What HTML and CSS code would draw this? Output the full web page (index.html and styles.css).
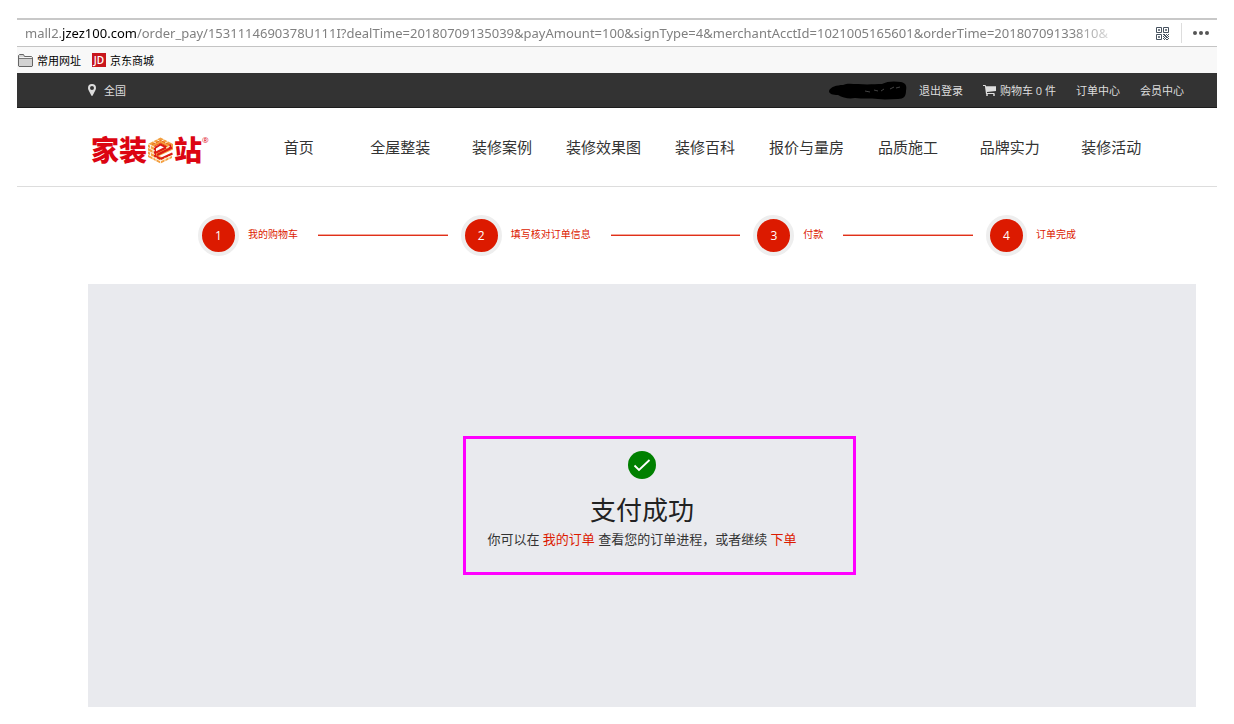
FILE: index.html
```html
<!DOCTYPE html>
<html lang="zh-CN">
<head>
  <meta charset="UTF-8">
  <meta name="viewport" content="width=device-width, initial-scale=1.0">
  <title>支付成功</title>
  <link rel="stylesheet" href="styles.css">
</head>
<body>
  <div class="window">
    <div class="address-bar">
      <div class="url" role="textbox" contenteditable="true" spellcheck="false">mall2.<span class="domain">jzez100.com</span>/order_pay/1531114690378U111I?dealTime=20180709135039&amp;payAmount=100&amp;signType=4&amp;merchantAcctId=1021005165601&amp;orderTime=20180709133810&amp;</div>
      <button class="qr-btn" aria-label="QR">
        <svg width="13" height="13" viewBox="0 0 13 13" fill="none" stroke="#46525f">
          <path d="M.5.5h5v5h-5zM7.5.5h5v5h-5zM.5 7.5h5v5h-5z"/>
          <path d="M2 3h2M9 3h2M2 10h2M3 2v2M10 2v2M3 9v2" />
          <path d="M7 7.5h2M10 7.5h1M12 7.5h1M8 8.5h2M11 8.5h1M7 9.5h1M9 9.5h2M12 9.5h1M8 10.5h1M10 10.5h2M7 11.5h1M9 11.5h1M12 11.5h1M8 12.5h1M10 12.5h2"/>
        </svg>
      </button>
      <button class="more-btn" aria-label="更多">
        <svg width="16" height="4" viewBox="0 0 16 4" fill="#555"><circle cx="2" cy="2" r="2"/><circle cx="8" cy="2" r="2"/><circle cx="14" cy="2" r="2"/></svg>
      </button>
    </div>

    <div class="bookmarks">
      <a href="#">
        <svg width="15" height="13" viewBox="0 0 15 13"><path d="M.5 12V1.5l1-1h4l1 2h7l1 1V12l-.5.5h-13z" fill="#d2d2d2" stroke="#666"/><path d="M1 4.5h13" stroke="#777"/><path d="M1.5 3.5h12" stroke="#f4f4f4"/></svg>
        常用网址
      </a>
      <a href="#"><span class="jd">JD</span>京东商城</a>
    </div>

    <div class="topbar">
      <a href="#" class="city">
        <svg width="8" height="12" viewBox="0 0 8 12"><path fill="#ddd" fill-rule="evenodd" d="M4 0a4 4 0 0 1 4 4c0 1-.3 1.600-.6 2.300L4.700 11.500a.8.8 0 0 1-1.400 0L.6 6.300C.3 5.600 0 5 0 4a4 4 0 0 1 4-4zm0 2a2 2 0 1 0 0 4 2 2 0 0 0 0-4z"/></svg>
        全国
      </a>
      <div class="user-links">
        <svg class="scribble" width="78" height="19" viewBox="0 0 78 19">
          <path d="M0 10C1 6 8 4 14 4c4-2 9-1 15-1 10 1 17 0 24 0 5-3 13-3 19-2 5 1 6 4 5 9 0 5-2 8-8 8-7 0-13 1-20 0-8-1-15 0-23-1-6 1-12 0-17-3-5 0-9-1-9-4z"/>
          <path d="M36 10l5 1M45 9l4 1M52 10l3-2M61 8l4-2M67 7l4-1" stroke="#444" fill="none"/>
        </svg>
        <a href="#">退出登录</a>
        <a href="#" class="cart">
          <svg width="13" height="11" viewBox="0 0 13 11" fill="#ddd"><path d="M0 0h2.600l.4 1.300h10v4.600L4 7v1h7.500v1H3L1.900 1H0z"/><circle cx="4" cy="10" r="1"/><circle cx="11" cy="10" r="1"/></svg>
          购物车 0 件
        </a>
        <a href="#">订单中心</a>
        <a href="#">会员中心</a>
      </div>
    </div>

    <header class="header">
      <a href="#" class="logo">
        <span>家装</span>
        <svg width="25" height="27" viewBox="0 0 25 27" fill="none">
          <!-- brick walls -->
          <path d="M0 7l12.500-6.500L25 7v6l-11 6 2 1 8-4v5l-11.500 5.500L0 20z" fill="#f4a040"/>
          <path d="M7 9.500l5.500-3L18 9.500v1L8 15.500z" fill="#fff"/>
          <path d="M11 19l14-6.500v3L15 20.500z" fill="#fff"/>
          <path d="M4 7.500l8.500-4 8.500 4M6.500 9l6-3 6 3" stroke="#ea6a20"/>
          <path d="M7 9.500v9.500l5.500 3 12-5.500M8 15.500l10-5M9 18l15-7.500" stroke="#dd1c14" stroke-width="2"/>
          <path d="M22 7.500v4M7 11l5.500-3.500 6 3" stroke="#dd1c14" stroke-width="2"/>
          <!-- joints -->
          <path d="M0 10.500l7 3.500M0 14l7 3.500M0 17.500l12.500 6.500L24 18.500M0 7l7 3.500M5 4.500l3 1.500M8.500 2.500l3 1.500M16.500 2.500l-3 1.500M20 4.500l-3 1.500M12.500 22.500V27M8 20v4.500M17 20.500V25M21 19v4M2.500 8v3.500M5 13v3.500M2.500 15.500V19M5 19.500V23M22 9l-4 2" stroke="#fff" stroke-width=".8"/>
        </svg>
        <span>站</span><sup>®</sup>
      </a>
      <nav class="nav">
        <a href="#">首页</a>
        <a href="#">全屋整装</a>
        <a href="#">装修案例</a>
        <a href="#">装修效果图</a>
        <a href="#">装修百科</a>
        <a href="#">报价与量房</a>
        <a href="#">品质施工</a>
        <a href="#">品牌实力</a>
        <a href="#">装修活动</a>
      </nav>
    </header>

    <div class="steps">
      <span class="num">1</span><span class="label">我的购物车</span>
      <i class="line"></i>
      <span class="num">2</span><span class="label">填写核对订单信息</span>
      <i class="line"></i>
      <span class="num">3</span><span class="label">付款</span>
      <i class="line"></i>
      <span class="num">4</span><span class="label">订单完成</span>
    </div>

    <main class="panel">
      <div class="result">
        <svg width="28" height="28" viewBox="0 0 28 28"><circle cx="14" cy="14" r="14" fill="#008000"/><path d="M6.500 14.500l4.500 4.500 10.500-10" fill="none" stroke="#fff" stroke-width="1.800"/></svg>
        <h1>支付成功</h1>
        <p>你可以在 <a href="#">我的订单</a> 查看您的订单进程，或者继续 <a href="#">下单</a></p>
        <div class="mark"></div>
      </div>
    </main>
  </div>
</body>
</html>
```
FILE: styles.css
```css
* {
  box-sizing: border-box;
}

body {
  margin: 18px 17px 17px;
  font-family: "Open Sans", "Noto Sans CJK SC", sans-serif;
  background: #fff;
  color: #333;
}

a {
  color: inherit;
  text-decoration: none;
}

svg {
  flex: none;
}

button {
  padding: 0;
  border: none;
  background: none;
  cursor: pointer;
}

.window {
  display: flex;
  flex-direction: column;
  min-height: calc(100vh - 35px);
  background: #fff;
  box-shadow: 0 0 20px rgba(0, 0, 0, 0.18);
}

/* browser bars */
.address-bar {
  display: flex;
  align-items: center;
  height: 29px;
  padding-left: 8px;
  border-top: 2px solid #c8c8c8;
  border-bottom: 1px solid #c4c4c4;
}

.url {
  flex: 1;
  min-width: 0;
  overflow: hidden;
  white-space: nowrap;
  font-family: "Noto Sans", sans-serif;
  font-size: 13px;
  line-height: 24px;
  color: #808080;
  outline: none;
  -webkit-mask-image: linear-gradient(to left, transparent, #000 50px);
  mask-image: linear-gradient(to left, transparent, #000 50px);
}

.domain {
  color: #000;
}

.qr-btn {
  display: flex;
  margin-left: 34px;
  margin-right: 12px;
}

.more-btn {
  display: flex;
  align-items: center;
  height: 20px;
  padding: 0 8px 0 11px;
  border-left: 1px solid #ddd;
}

.bookmarks {
  display: flex;
  gap: 11px;
  height: 26px;
  padding-left: 1px;
  background: #f8f8f8;
  font-size: 11px;
  color: #000;
}

.bookmarks a {
  display: flex;
  align-items: center;
  gap: 4px;
}

.jd {
  width: 14px;
  height: 14px;
  background: #c8161d;
  color: #fff;
  font-size: 10px;
  font-weight: 600;
  line-height: 14px;
  text-align: center;
}

/* site */
.topbar {
  display: flex;
  align-items: center;
  justify-content: space-between;
  height: 35px;
  padding: 0 33px 0 71px;
  background: #333;
  border-bottom: 1px solid #1c1c1c;
  font-size: 11px;
  color: #ddd;
}

.city {
  display: flex;
  align-items: center;
  gap: 8px;
}

.user-links {
  display: flex;
  align-items: center;
  gap: 20px;
}

.scribble {
  margin-right: -8px;
}

.cart {
  display: flex;
  align-items: center;
  gap: 4px;
}

.header {
  display: flex;
  align-items: center;
  height: 79px;
  padding: 0 55px 0 74px;
  border-bottom: 1px solid #ddd;
}

.logo {
  display: flex;
  align-items: center;
  flex: none;
  width: 157px;
  padding-top: 6px;
  color: #dc0512;
  font-size: 28px;
  font-weight: 900;
  line-height: 32px;
}

.logo svg {
  margin: 0 1px;
}

.logo sup {
  align-self: flex-start;
  font-size: 8px;
  font-weight: 400;
  line-height: 12px;
}

.nav {
  flex: 1;
  display: grid;
  grid-template-columns: repeat(9, 1fr);
  padding-bottom: 2px;
  font-size: 15px;
  text-align: center;
  white-space: nowrap;
}

.steps {
  display: flex;
  align-items: center;
  height: 97px;
  padding: 0 141px 0 181px;
  color: #dc1a00;
}

.num {
  width: 41px;
  height: 41px;
  border: 4px solid #eee;
  border-radius: 50%;
  background: #dc1a00;
  color: #fff;
  font-size: 12px;
  line-height: 33px;
  text-align: center;
}

.label {
  margin-left: 9px;
  padding-bottom: 4px;
  font-size: 10px;
}

.line {
  flex: 1;
  height: 2px;
  margin: 0 13px 1px 20px;
  border-top: 1px solid #f3a699;
  background: #e0301a;
}

.panel {
  flex: 1;
  margin: 0 21px 0 71px;
  padding-top: 167px;
  background: #e9eaee;
  text-align: center;
}

.result {
  position: relative;
  width: 310px;
  margin: 0 auto;
}

.result svg {
  display: block;
  margin: 0 auto 12px;
}

.result h1 {
  margin: 0;
  font-size: 26px;
  font-weight: 400;
  line-height: 38px;
  color: #222;
}

.result p {
  margin: 0;
  font-size: 13px;
  line-height: 20px;
  white-space: nowrap;
}

.result a {
  color: #dc1a00;
}

.mark {
  position: absolute;
  top: -15px;
  right: -59px;
  bottom: -26px;
  left: -24px;
  border: 3px solid #f0f;
  pointer-events: none;
}
```
